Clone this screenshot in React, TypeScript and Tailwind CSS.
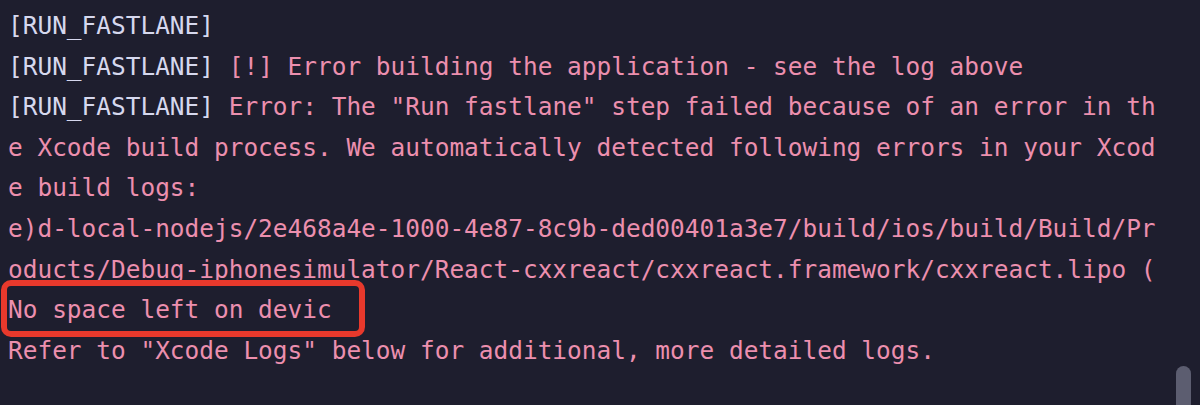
const lines: { tag?: string; text: string }[] = [
  { tag: "[RUN_FASTLANE]", text: "" },
  { tag: "[RUN_FASTLANE] ", text: "[!] Error building the application - see the log above" },
  { tag: "[RUN_FASTLANE] ", text: 'Error: The "Run fastlane" step failed because of an error in th' },
  { text: "e Xcode build process. We automatically detected following errors in your Xcod" },
  { text: "e build logs:" },
  { text: "e)d-local-nodejs/2e468a4e-1000-4e87-8c9b-ded00401a3e7/build/ios/build/Build/Pr" },
  { text: "oducts/Debug-iphonesimulator/React-cxxreact/cxxreact.framework/cxxreact.lipo (" },
  { text: "No space left on devic" },
  { text: 'Refer to "Xcode Logs" below for additional, more detailed logs.' },
];

export default function App() {
  return (
    <div className="relative h-[405px] w-[1200px] overflow-hidden bg-[#1e1e2e]">
      <div className="pl-[8px] pt-[6px] font-['DejaVu_Sans_Mono',monospace] text-[24.45px] leading-[40.6px] text-[#ec8fae]">
        {lines.map((l, i) => (
          <div key={i} className="whitespace-pre">
            {l.tag && <span className="text-[#d6d8ee]">{l.tag}</span>}
            {l.text}
          </div>
        ))}
      </div>

      {/* annotation box */}
      <div className="absolute left-[1px] top-[280px] h-[57px] w-[364px] rounded-[10px] border-[6px] border-[#e8392c]" />

      {/* scrollbar thumb */}
      <div className="absolute left-[1176px] top-[366px] h-[60px] w-[15px] rounded-full bg-[#5c5d70]" />
    </div>
  );
}
